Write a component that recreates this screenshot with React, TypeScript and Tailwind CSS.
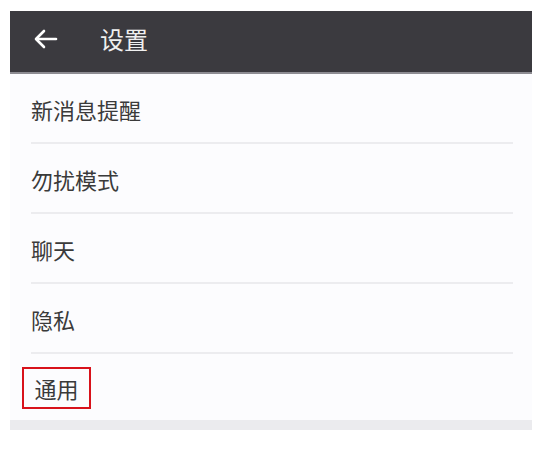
import React from "react";

const items = ["新消息提醒", "勿扰模式", "聊天", "隐私", "通用"];

export default function App() {
  return (
    <div
      className="w-[539px] h-[454px] bg-white pt-[11px] pl-[10px]"
      style={{ fontFamily: '"Noto Sans CJK SC", "Noto Sans", sans-serif' }}
    >
      <div className="w-[522px] bg-[#fcfcfe]">
        <div className="h-[63px] bg-[#3b3a3f] border-b-2 border-[#8d8c92] flex items-center pb-[6px]">
          <svg width="24" height="20" viewBox="0 0 24 20" className="ml-[24px]" fill="none" stroke="white" strokeWidth="2.6" strokeLinecap="round" strokeLinejoin="round">
            <path d="M22 10H3" />
            <path d="M10 2L2 10l8 8" />
          </svg>
          <span className="ml-[42px] text-[24px] leading-none text-[#f0f0f0]">设置</span>
        </div>
        {items.map((t, i) => (
          <div key={t} className="pl-[21px] pr-[19px]">
            <div
              className={
                "h-[70px] flex items-center " +
                (i < items.length - 1 ? "border-b-2 border-[#ececef] pt-[1px]" : "")
              }
            >
              {i === items.length - 1 ? (
                <span className="-ml-[9px] -mt-[2px] border-2 border-[#d8121b] h-[42px] w-[69px] flex items-center justify-center text-[22px] text-[#3a3a3a] leading-none">
                  {t}
                </span>
              ) : (
                <span className="text-[22px] text-[#3a3a3a] leading-none">{t}</span>
              )}
            </div>
          </div>
        ))}
        <div className="h-[10px] bg-[#ebebee] -mt-[4px]" />
      </div>
    </div>
  );
}
